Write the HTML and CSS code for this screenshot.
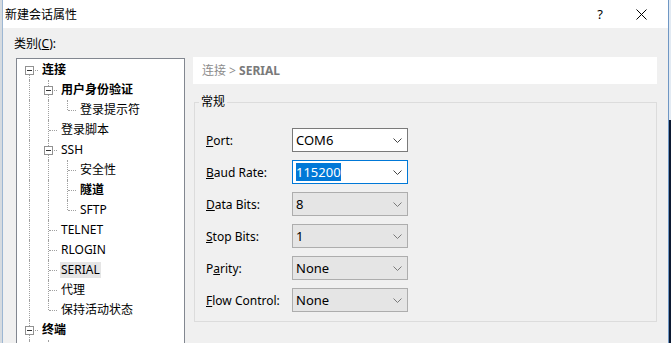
FILE: index.html
```html
<!DOCTYPE html>
<html lang="zh-CN">
<head>
    <meta charset="UTF-8">
    <title>新建会话属性</title>
    <link rel="stylesheet" href="styles.css">
</head>
<body>
    <div class="window">
        <div class="titlebar">
            <span class="title">新建会话属性</span>
            <span class="help">?</span>
            <span class="close">
                <svg width="11" height="11" viewBox="0 0 11 11"><path d="M0.5 0.5 L10.5 10.5 M10.5 0.5 L0.5 10.5" stroke="#000" stroke-width="1" fill="none"/></svg>
            </span>
        </div>

        <div class="body">
            <div class="cat-label">类别(<u>C</u>):</div>

            <div class="main">
                <!-- 左側樹狀目錄 -->
                <div class="tree">
                    <div class="row"><i class="c first"><b class="exp"></b></i><span class="t bold">连接</span></div>
                    <div class="row"><i class="c pipe"></i><i class="c tee"><b class="exp"></b></i><span class="t bold">用户身份验证</span></div>
                    <div class="row"><i class="c pipe"></i><i class="c pipe"></i><i class="c ell"></i><span class="t">登录提示符</span></div>
                    <div class="row"><i class="c pipe"></i><i class="c tee"></i><span class="t">登录脚本</span></div>
                    <div class="row"><i class="c pipe"></i><i class="c tee"><b class="exp"></b></i><span class="t">SSH</span></div>
                    <div class="row"><i class="c pipe"></i><i class="c pipe"></i><i class="c tee"></i><span class="t">安全性</span></div>
                    <div class="row"><i class="c pipe"></i><i class="c pipe"></i><i class="c tee"></i><span class="t bold">隧道</span></div>
                    <div class="row"><i class="c pipe"></i><i class="c pipe"></i><i class="c ell"></i><span class="t">SFTP</span></div>
                    <div class="row"><i class="c pipe"></i><i class="c tee"></i><span class="t">TELNET</span></div>
                    <div class="row"><i class="c pipe"></i><i class="c tee"></i><span class="t">RLOGIN</span></div>
                    <div class="row"><i class="c pipe"></i><i class="c tee"></i><span class="t selected">SERIAL</span></div>
                    <div class="row"><i class="c pipe"></i><i class="c tee"></i><span class="t">代理</span></div>
                    <div class="row"><i class="c pipe"></i><i class="c ell"></i><span class="t">保持活动状态</span></div>
                    <div class="row"><i class="c tee"><b class="exp"></b></i><span class="t bold">终端</span></div>
                    <div class="row"><i class="c pipe"></i><i class="c tee"></i></div>
                </div>

                <!-- 右側設定內容 -->
                <div class="content">
                    <div class="crumb">连接 &gt; <b>SERIAL</b></div>

                    <fieldset class="group">
                        <legend>常规</legend>
                        <div class="rows">
                            <div class="field">
                                <label><u>P</u>ort:</label>
                                <div class="combo"><span class="val">COM6</span><svg class="arrow" width="9" height="5" viewBox="0 0 9 5"><path d="M0.5 0.5 L4.5 4.5 L8.5 0.5" stroke="#444" fill="none"/></svg></div>
                            </div>
                            <div class="field">
                                <label><u>B</u>aud Rate:</label>
                                <div class="combo focus"><span class="val"><span class="sel">115200</span></span><svg class="arrow" width="9" height="5" viewBox="0 0 9 5"><path d="M0.5 0.5 L4.5 4.5 L8.5 0.5" stroke="#444" fill="none"/></svg></div>
                            </div>
                            <div class="field">
                                <label><u>D</u>ata Bits:</label>
                                <div class="combo list"><span class="val">8</span><svg class="arrow" width="9" height="5" viewBox="0 0 9 5"><path d="M0.5 0.5 L4.5 4.5 L8.5 0.5" stroke="#7a7a7a" fill="none"/></svg></div>
                            </div>
                            <div class="field">
                                <label><u>S</u>top Bits:</label>
                                <div class="combo list"><span class="val">1</span><svg class="arrow" width="9" height="5" viewBox="0 0 9 5"><path d="M0.5 0.5 L4.5 4.5 L8.5 0.5" stroke="#7a7a7a" fill="none"/></svg></div>
                            </div>
                            <div class="field">
                                <label>P<u>a</u>rity:</label>
                                <div class="combo list"><span class="val">None</span><svg class="arrow" width="9" height="5" viewBox="0 0 9 5"><path d="M0.5 0.5 L4.5 4.5 L8.5 0.5" stroke="#7a7a7a" fill="none"/></svg></div>
                            </div>
                            <div class="field">
                                <label><u>F</u>low Control:</label>
                                <div class="combo list"><span class="val">None</span><svg class="arrow" width="9" height="5" viewBox="0 0 9 5"><path d="M0.5 0.5 L4.5 4.5 L8.5 0.5" stroke="#7a7a7a" fill="none"/></svg></div>
                            </div>
                        </div>
                    </fieldset>
                </div>
            </div>
        </div>
    </div>
</body>
</html>
```

FILE: styles.css
```css
html {
    /* 視窗外的背景 */
    background:
        linear-gradient(to right, #d6dbe0 2px, transparent 2px),
        linear-gradient(#e2eaf3 120px, #0d1a33 120px);
    height: 100%;
}
body {
    margin: 0;
    height: 343px;
    overflow: hidden;
    font-family: "Noto Sans", "Noto Sans CJK SC", sans-serif;
    font-size: 12px;
    color: #000;
}
.window {
    width: 665px;
    height: 343px;
    margin-left: 2px;
    border-left: 1px solid #9db7d3;
    border-right: 1px solid #6f97c4;
    background: #f0f0f0;
    overflow: hidden;
}

/* 標題列 */
.titlebar {
    height: 28px;
    background: #fff;
    display: flex;
    align-items: center;
    padding-left: 2px;
}
.title {
    flex: 1;
}
.help {
    width: 30px;
    text-align: center;
    font-size: 13px;
}
.close {
    width: 46px;
    margin-left: 3px;
    margin-right: 4px;
    display: flex;
    justify-content: center;
    align-items: center;
}

.body {
    padding-left: 11px;
}
.cat-label {
    margin-top: 8px;
    line-height: 16px;
}
.main {
    display: flex;
    align-items: flex-start;
    margin-top: 5px;
}

/* 樹狀目錄 */
.tree {
    width: 169px;
    height: 300px;
    box-sizing: border-box;
    margin-left: 2px;
    margin-top: 1px;
    border: 1px solid #828790;
    background: #fff;
    padding: 1px 0 0 3px;
}
.row {
    display: flex;
    align-items: center;
    height: 20px;
}
.c {
    position: relative;
    width: 19px;
    height: 20px;
    flex-shrink: 0;
}
.c::before,
.c::after {
    content: "";
    position: absolute;
}
.pipe::before,
.tee::before {
    left: 9px;
    top: 0;
    height: 20px;
    border-left: 1px dotted #a0a0a0;
}
.ell::before {
    left: 9px;
    top: 0;
    height: 10px;
    border-left: 1px dotted #a0a0a0;
}
.first::before {
    left: 9px;
    top: 10px;
    height: 10px;
    border-left: 1px dotted #a0a0a0;
}
.tee::after,
.ell::after,
.first::after {
    left: 10px;
    top: 10px;
    width: 8px;
    border-top: 1px dotted #a0a0a0;
}
.exp {
    position: absolute;
    left: 5px;
    top: 6px;
    width: 9px;
    height: 9px;
    box-sizing: border-box;
    border: 1px solid #919191;
    background: #fff;
    z-index: 1;
}
.exp::after {
    content: "";
    position: absolute;
    left: 1px;
    top: 3px;
    width: 5px;
    height: 1px;
    background: #333;
}
.t {
    margin-left: 2px;
    padding: 0 1px;
    line-height: 16px;
    white-space: nowrap;
}
.bold {
    font-weight: bold;
}
.selected {
    background: #e5e5e5;
}

/* 右側內容 */
.content {
    width: 464px;
    margin-left: 8px;
}
.crumb {
    height: 27px;
    line-height: 27px;
    background: #fff;
    padding-left: 9px;
    color: #8c8c8c;
}
.crumb b {
    color: #7a7a7a;
}
.group {
    box-sizing: border-box;
    width: 463px;
    margin: 10px 0 0 1px;
    padding: 0 10px 9px 4px;
    border: 1px solid #dcdcdc;
    border-radius: 0;
}
.group legend {
    padding: 0 2px;
    line-height: 16px;
}
.rows {
    margin-top: 18px;
    padding-left: 7px;
    display: flex;
    flex-direction: column;
    gap: 8px;
}
.field {
    display: flex;
    align-items: center;
    height: 24px;
}
.field label {
    width: 86px;
}
.combo {
    box-sizing: border-box;
    width: 116px;
    height: 24px;
    display: flex;
    align-items: center;
    border: 1px solid #7a7a7a;
    background: #fff;
    padding: 0 5px 0 3px;
    font-size: 13px;
}
.combo .val {
    flex: 1;
}
.combo.focus {
    border-color: #0078d7;
}
.combo.list {
    background: #e5e5e5;
    border-color: #adadad;
}
.sel {
    background: #0078d7;
    color: #fff;
}
```
